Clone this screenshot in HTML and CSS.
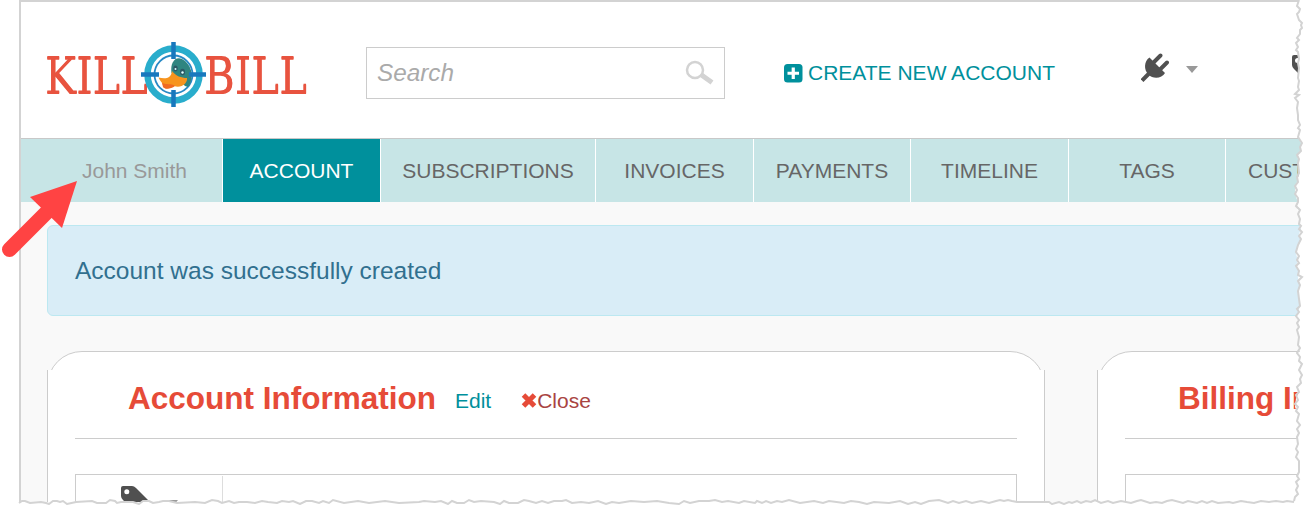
FILE: index.html
```html
<!DOCTYPE html>
<html lang="en">
<head>
<meta charset="utf-8">
<title>Kill Bill - Account</title>
<link rel="stylesheet" href="styles.css">
</head>
<body>
<div class="frame">
  <header class="header">
    <svg class="logo" width="262" height="68" viewBox="46 40 262 68" role="img" aria-label="Kill Bill">
      <g class="logo-text">
        <text x="45" y="93" textLength="103" lengthAdjust="spacingAndGlyphs">KILL</text>
        <text x="204" y="93" textLength="103" lengthAdjust="spacingAndGlyphs">BILL</text>
      </g>
      <circle cx="173.500" cy="74.500" r="26" fill="#fff" stroke="#29adcc" stroke-width="6.500"/>
      <circle cx="173.500" cy="74.500" r="19" fill="none" stroke="#2789c5" stroke-width="1.800"/>
      <path d="M171.500 73C170 63 175 56 182 59C193 65 194 79 188 87L185 86Z" fill="#2f8580"/>
      <path d="M172 71C171 79 165 79 158.500 77.500C160 81 162 82 163 85C163 90 170 89 174 86C181 89 188 83 187 78C181 78 176 76 172 71Z" fill="#f7941e"/>
      <path d="M162 83C167 85 171 83 175 86C171 89 165 90 163 87Z" fill="#f06a22"/>
      <ellipse cx="175.500" cy="68.500" rx="2.200" ry="3" fill="#2b5a66"/><circle cx="175.500" cy="69" r="1" fill="#dff"/>
      <ellipse cx="182.500" cy="72" rx="2.500" ry="3.200" fill="#2b5a66"/><circle cx="182.500" cy="72.500" r="1.200" fill="#dff"/>
      <path d="M173.500 42V59M173.500 90V107M141 74.500H159M189 74.500H206" stroke="#1878bd" stroke-width="4.500"/>
    </svg>
    <div class="search">
      <span>Search</span>
      <svg width="30" height="26" viewBox="0 0 30 26" fill="none" stroke="#d3d3d3"><circle cx="10" cy="10" r="8" stroke-width="2.500"/><path d="M16.500 15L27 22.500" stroke-width="5"/></svg>
    </div>
    <a class="create">
      <svg width="19" height="19" viewBox="0 0 19 19"><rect width="18.500" height="18.500" rx="3.500" fill="#00909c"/><path d="M9.250 3.500V15M3.500 9.250H15" stroke="#fff" stroke-width="3.200"/></svg>
      <span>CREATE NEW ACCOUNT</span>
    </a>
    <svg class="plug" width="29" height="29" viewBox="0 0 29 29"><path d="M1 27.500L8 20.500" stroke="#505050" stroke-width="4"/><path d="M8.500 4.500L24 20C21 25.500 12 26.500 7.500 21.500C2.500 17 3 8 8.500 4.500Z" fill="#505050"/><path d="M12 10L19.500 2.500M18.500 17L26 9.500" stroke="#505050" stroke-width="3.900" stroke-linecap="round"/></svg>
    <i class="caret"></i>
    <svg class="tag" width="29" height="29" viewBox="0 0 29 29"><path d="M2 0H11Q13 0 15 2L28 15L16 28L2 14Q0 12 0 10V2Q0 0 2 0Z" fill="#505050"/><circle cx="5.500" cy="5.500" r="2.500" fill="#fff"/></svg>
  </header>
  <nav class="nav">
    <a class="tab customer">John Smith</a>
    <a class="tab active">ACCOUNT</a>
    <a class="tab wide">SUBSCRIPTIONS</a>
    <a class="tab">INVOICES</a>
    <a class="tab narrow">PAYMENTS</a>
    <a class="tab">TIMELINE</a>
    <a class="tab narrow">TAGS</a>
    <a class="tab custom">CUST</a>
  </nav>
  <main class="content">
    <div class="alert">Account was successfully created</div>
    <div class="cards">
      <section class="card">
        <div class="card-cap"></div>
        <div class="card-body">
          <div class="card-head">
            <h2>Account Information</h2>
            <a class="edit">Edit</a>
            <a class="close"><svg width="16" height="15" viewBox="0 0 16 15"><path d="M2.500 2L13.500 13M13.500 2L2.500 13" stroke="#e64b38" stroke-width="5"/></svg>Close</a>
          </div>
          <div class="table">
            <div class="cell">
              <svg width="29" height="29" viewBox="0 0 29 29"><path d="M2 0H11Q13 0 15 2L28 15L16 28L2 14Q0 12 0 10V2Q0 0 2 0Z" fill="#505050"/><circle cx="5.800" cy="5.800" r="2.500" fill="#fff"/></svg>
              <i class="caret"></i>
            </div>
          </div>
        </div>
      </section>
      <section class="card">
        <div class="card-cap"></div>
        <div class="card-body">
          <div class="card-head"><h2>Billing In</h2></div>
          <div class="table"></div>
        </div>
      </section>
    </div>
  </main>
</div>
<svg class="torn" width="1304" height="505" viewBox="0 0 1304 505">
  <path fill="#fff" d="M1304 0H1299L1297 6L1300 12L1297 16L1299 20L1302 25L1301 29L1300 34L1298 39L1296 43L1298 47L1296 51L1299 59L1299 68L1299 78L1298 87L1299 92L1295 95L1298 102L1297 108L1298 115L1298 120L1300 127L1298 137L1301 143L1300 151L1297 155L1299 163L1299 173L1297 182L1295 190L1296 197L1298 202L1297 209L1300 216L1299 224L1301 229L1299 234L1301 239L1298 245L1296 254L1298 260L1296 266L1299 271L1298 278L1300 285L1298 291L1299 299L1300 306L1297 316L1299 323L1297 330L1299 337L1298 345L1300 351L1297 356L1301 363L1299 370L1301 379L1298 387L1299 392L1296 398L1295 407L1298 414L1296 421L1299 429L1297 437L1298 444L1296 455L1299 461L1299 472L1296 479L1298 486L1296 497L1293 501L1288 502L1284 501L1278 502H1304Z"/>
  <path fill="#fff" d="M0 505V502H1300V505Z"/>
  <g class="tear-line" transform="translate(-1 0)">
    <path d="M1300 0L1299 3L1298 6L1301 9L1300 12L1298 14L1299 17L1300 20L1303 23L1302 25L1303 28L1301 30L1301 34L1298 38L1300 40L1297 43L1299 47L1297 50L1299 52L1300 59L1299 63L1300 68L1299 78L1300 81L1299 87L1300 90L1296 94L1300 95L1296 98L1299 102L1298 108L1299 115L1299 120L1301 125L1299 128L1301 130L1299 137L1303 143L1301 147L1302 151L1298 155L1300 159L1299 163L1300 173L1298 177L1299 182L1296 186L1298 190L1296 194L1299 198L1299 202L1297 206L1301 210L1299 214L1301 219L1300 224L1302 226L1300 229L1303 232L1300 236L1302 239L1299 245L1297 252L1300 256L1298 260L1300 263L1297 266L1300 271L1299 275L1303 277L1299 281L1301 285L1299 291L1300 299L1301 306L1298 309L1300 312L1297 316L1300 320L1298 323L1300 327L1298 330L1300 337L1299 345L1301 348L1298 353L1301 357L1300 361L1303 364L1300 370L1303 375L1301 379L1302 383L1298 387L1300 392L1297 395L1299 400L1296 404L1299 407L1297 411L1300 414L1298 421L1301 425L1298 429L1300 433L1298 437L1299 444L1297 449L1299 452L1297 457L1300 461L1300 472L1298 476L1300 479L1297 482L1299 486L1297 490L1299 494L1296 497L1295 501"/>
    <path d="M20 503L23 501L26 501L31 503L42 502L47 503L50 504L54 501L58 501L61 502L64 501L68 504L77 502L93 501L98 503L107 503L111 500L116 501L118 503L122 502L134 502L140 504L144 501L150 501L154 503L160 502L164 501L170 501L178 503L196 502L206 503L213 500L219 501L223 503L230 501L235 503L240 502L248 502L256 503L263 501L269 502L278 503L283 501L290 502L294 501L301 504L307 501L313 501L320 503L324 501L330 503L334 500L345 503L359 501L370 503L386 501L400 503L420 502L425 501L436 502L442 501L449 504L453 501L458 503L465 503L470 500L475 502L482 501L495 502L501 504L505 501L510 503L519 503L525 500L530 501L537 503L543 501L549 503L555 501L563 501L567 500L573 503L582 502L590 503L599 501L607 504L613 502L620 503L632 501L645 502L658 501L670 503L680 504L685 501L691 503L700 501L710 501L716 500L723 502L729 501L740 503L745 501L756 503L758 501L763 503L767 501L772 503L778 501L783 502L790 500L801 503L815 501L824 503L830 501L845 503L852 501L860 502L868 504L875 502L890 503L901 501L909 504L916 502L922 504L930 501L940 500L949 503L954 501L960 503L967 501L973 503L982 501L990 503L997 501L1001 500L1005 501L1009 500L1013 501L1018 502L1050 502L1053 504L1060 502L1065 504L1070 502L1073 503L1078 501L1082 503L1087 501L1092 502L1096 500L1102 503L1109 501L1114 503L1122 501L1132 503L1138 501L1142 500L1151 503L1157 502L1163 503L1168 501L1173 500L1184 503L1189 501L1198 503L1203 501L1208 503L1213 501L1219 503L1230 502L1234 503L1242 501L1248 502L1255 503L1262 501L1270 502L1277 501L1284 502L1288 501L1295 502"/>
  </g>
</svg>
<svg class="arrow" width="80" height="80" viewBox="0 178 80 80"><path d="M9.500 249.500L48 211" stroke="#ff4343" stroke-width="15" stroke-linecap="round"/><path d="M77 181L30 197L62 228Z" fill="#ff4343"/></svg>
</body>
</html>
```
FILE: styles.css
```css
* { box-sizing: border-box; }
body { margin: 0; position: relative; width: 1304px; height: 505px; overflow: hidden; background: #fff; font-family: "Liberation Sans", Arial, sans-serif; font-size: 21px; }
.frame { margin-left: 19px; width: 1285px; height: 505px; overflow: hidden; border-left: 2px solid #d3d3d3; border-top: 2px solid #d3d3d3; background: #f9f9f9; }
.header { display: flex; align-items: flex-start; height: 137px; border-bottom: 1px solid #c8c8c8; background: #fff; padding-left: 25px; overflow: hidden; }
.header > * { flex-shrink: 0; }
.logo { margin-top: 38px; }
.logo-text { font-family: "DejaVu Serif", serif; font-size: 49.5px; fill: #e8533f; filter: drop-shadow(0 1.3px 0 #e8533f); }
.search { display: flex; justify-content: space-between; align-items: center; margin: 45px 0 0 58px; width: 359px; height: 52px; border: 1px solid #ccc; padding: 0 9px 0 10px; color: #aaa; font-size: 24.3px; font-style: italic; }
.search svg { margin-top: -1px; }
.create { display: flex; align-items: center; gap: 5px; margin: 59px 0 0 59px; width: 273px; line-height: 24px; color: #00909c; white-space: nowrap; }
.plug { margin: 51px 0 0 84px; }
.caret { flex-shrink: 0; border: 6.5px solid transparent; border-top: 7px solid #999; border-bottom: 0; }
.header .caret { margin: 64px 0 0 16px; }
.tag { margin: 53px 0 0 94px; }
.nav { display: flex; height: 63px; overflow: hidden; }
.tab { flex: 0 0 158px; border-left: 1px solid #fff; background: #c7e5e6; color: #666; text-align: center; line-height: 64px; white-space: nowrap; }
.tab.customer { flex-basis: 201px; border-left: 0; padding-left: 26px; color: #999; }
.tab.active { background: #00909c; color: #fff; }
.tab.wide { flex-basis: 215px; }
.tab.narrow { flex-basis: 157px; }
.tab.custom { padding-left: 22px; flex-basis: 200px; text-align: left; }
.content { padding: 23px 0 0 26px; }
.alert { width: 1300px; height: 91px; border: 1px solid #bce8f1; border-radius: 6px; background: #d9edf7; padding-left: 27px; color: #31708f; font-size: 24.5px; line-height: 89px; }
.cards { display: flex; gap: 52px; margin-top: 35px; }
.card { flex: 0 0 998px; }
.card-cap { height: 19px; overflow: hidden; }
.card-cap::before { content: ""; display: block; height: 80px; border: 1px solid #ccc; border-radius: 35px; background: #fff; }
.card-body { height: 150px; border: solid #ccc; border-width: 0 1px; background: #fff; padding: 0 27px; }
.card-head { display: flex; align-items: baseline; height: 69px; border-bottom: 1px solid #ccc; padding: 10px 0 0 53px; white-space: nowrap; }
h2 { margin: 0; color: #e64b38; font-size: 31.5px; line-height: 36px; }
.edit, .close { position: relative; top: -1px; }
.edit { margin-left: 19px; color: #00909c; }
.close { margin-left: 30px; color: #a94442; }
.table { margin-top: 35px; height: 60px; border: 1px solid #ccc; }
.cell { display: flex; width: 147px; height: 59px; margin-top: 1px; border-right: 1px solid #ddd; padding: 10px 0 0 45px; }
.cell .caret { margin: 14px 0 0 16px; }
.torn { position: absolute; left: 0; top: 0; }
.tear-line { fill: none; stroke: #d3d3d3; stroke-width: 2; }
.arrow { position: absolute; left: 0; top: 178px; }
```
